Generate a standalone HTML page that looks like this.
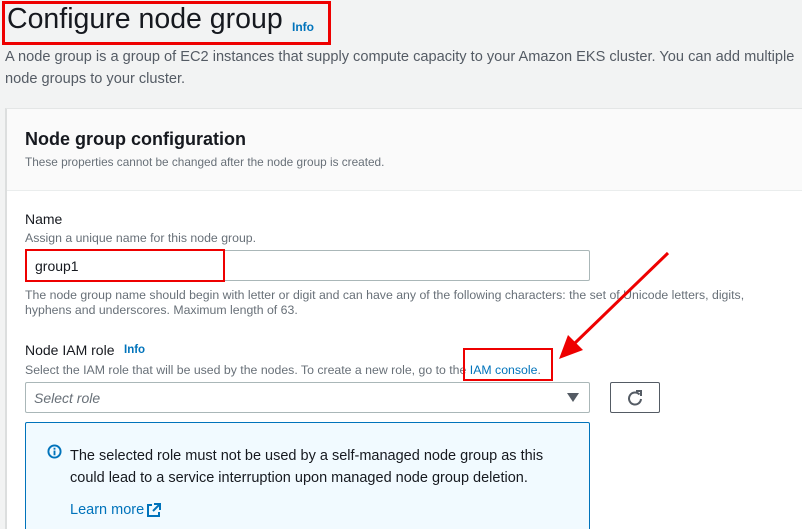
<!DOCTYPE html>
<html><head><style>
*{margin:0;padding:0;box-sizing:border-box}
html,body{width:802px;height:529px;overflow:hidden}
body{background:#f2f3f3;font-family:"Liberation Sans",Arial,sans-serif;color:#16191f;position:relative}
.a{position:absolute;white-space:nowrap}
.info{color:#0073bb;font-weight:bold;font-size:12px}
.lbl{font-size:14px;color:#16191f}
.hint{font-size:12.3px;color:#687078}
</style></head><body>
<div class="a" style="left:7px;top:3px;font-size:28.5px;color:#16191f">Configure node group</div>
<div class="a info" style="left:292px;top:20px">Info</div>
<div class="a" style="left:2px;top:1px;width:329px;height:44px;border:3px solid #e00"></div>
<div class="a" style="left:5px;top:46px;font-size:14.6px;line-height:22px;color:#545b64">A node group is a group of EC2 instances that supply compute capacity to your Amazon EKS cluster. You can add multiple<br>node groups to your cluster.</div>
<div class="a" style="left:5px;top:108px;width:820px;height:440px;background:#fff;border:1px solid #e4e6e6;border-left:2px solid #dcdede"></div>
<div class="a" style="left:7px;top:109px;width:820px;height:82px;background:#fafafa;border-bottom:1px solid #eaeded"></div>
<div class="a" style="left:25px;top:129px;font-size:18px;font-weight:bold">Node group configuration</div>
<div class="a hint" style="left:25px;top:155px;font-size:11.8px">These properties cannot be changed after the node group is created.</div>
<div class="a lbl" style="left:25px;top:211px">Name</div>
<div class="a hint" style="left:25px;top:231px">Assign a unique name for this node group.</div>
<div class="a" style="left:25px;top:250px;width:565px;height:31px;border:1px solid #aab7b8;border-radius:2px;background:#fff"></div>
<div class="a" style="left:35px;top:258px;font-size:14px">group1</div>
<div class="a" style="left:25px;top:249px;width:200px;height:33px;border:2px solid #e00"></div>
<div class="a hint" style="left:25px;top:288px;line-height:15px">The node group name should begin with letter or digit and can have any of the following characters: the set of Unicode letters, digits,<br>hyphens and underscores. Maximum length of 63.</div>
<div class="a lbl" style="left:25px;top:342px">Node IAM role</div>
<div class="a info" style="left:124px;top:344px;font-size:11.5px">Info</div>
<div class="a hint" style="left:25px;top:363px">Select the IAM role that will be used by the nodes. To create a new role, go to the <span style="color:#0073bb">IAM console</span>.</div>
<div class="a" style="left:463px;top:348px;width:90px;height:33px;border:2px solid #e00"></div>
<div class="a" style="left:25px;top:382px;width:565px;height:31px;border:1px solid #aab7b8;border-radius:2px;background:#fff"></div>
<div class="a" style="left:34px;top:390px;font-size:14px;font-style:italic;color:#687078">Select role</div>
<div class="a" style="left:567px;top:393px;width:0;height:0;border-left:6px solid transparent;border-right:6px solid transparent;border-top:9px solid #545b64"></div>
<div class="a" style="left:610px;top:382px;width:50px;height:31px;border:1px solid #545b64;border-radius:2px;background:#fff"></div>
<svg class="a" style="left:626px;top:389px" width="18" height="18" viewBox="0 0 18 18"><path d="M13.5 5.5A6 6 0 1 0 15 10" fill="none" stroke="#545b64" stroke-width="2"/><path d="M10 2h5v5" fill="none" stroke="#545b64" stroke-width="2"/></svg>
<div class="a" style="left:25px;top:422px;width:565px;height:120px;background:#f1faff;border:1px solid #0073bb;border-radius:2px"></div>
<svg class="a" style="left:47px;top:444px" width="15" height="15" viewBox="0 0 16 16"><circle cx="8" cy="8" r="6.5" fill="none" stroke="#0073bb" stroke-width="2"/><rect x="7" y="7" width="2" height="5" fill="#0073bb"/><rect x="7" y="4" width="2" height="2" fill="#0073bb"/></svg>
<div class="a" style="left:70px;top:445px;font-size:14.5px;line-height:22px">The selected role must not be used by a self-managed node group as this<br>could lead to a service interruption upon managed node group deletion.</div>
<div class="a" style="left:70px;top:502px;font-size:14.5px;color:#0073bb">Learn more</div>
<svg class="a" style="left:146px;top:503px" width="15" height="15" viewBox="0 0 15 15"><path d="M6 2H2v11h11V9" fill="none" stroke="#0073bb" stroke-width="2"/><path d="M8 1h6v6M14 1L7 8" fill="none" stroke="#0073bb" stroke-width="2"/></svg>
<svg class="a" style="left:0;top:0" width="802" height="529"><line x1="668" y1="253" x2="575" y2="343" stroke="#e00" stroke-width="3"/><polygon points="559,359 568,335 583,350" fill="#e00"/></svg>
</body></html>
